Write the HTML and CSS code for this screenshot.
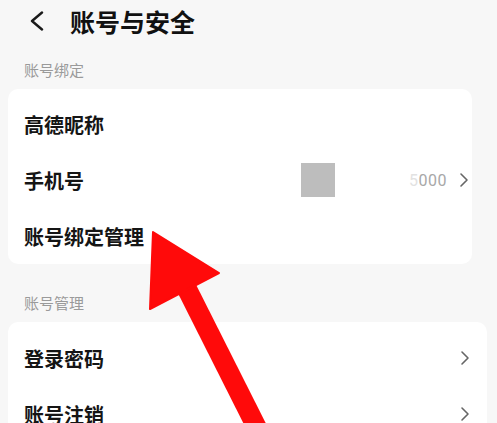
FILE: index.html
```html
<!DOCTYPE html>
<html lang="zh-CN">
<head>
<meta charset="utf-8">
<title>账号与安全</title>
<link rel="stylesheet" href="styles.css">
</head>
<body>
<div class="page">
  <header class="header">
    <svg class="back" width="16" height="20" viewBox="0 0 16 20"><path d="M13 1.5 L3 10 L13 18.5" fill="none" stroke="#1a1a1a" stroke-width="2.4" stroke-linecap="round" stroke-linejoin="round"/></svg>
    <h1 class="title">账号与安全</h1>
  </header>

  <div class="section-label">账号绑定</div>
  <div class="card card-a">
    <div class="row"><span class="row-text">高德昵称</span></div>
    <div class="row">
      <span class="row-text">手机号</span>
      <span class="mask"></span>
      <span class="value"><span class="faded">5</span>000</span>
      <svg class="chev" width="10" height="16" viewBox="0 0 10 16"><path d="M2 2 L8 8 L2 14" fill="none" stroke="#666" stroke-width="1.6" stroke-linecap="round" stroke-linejoin="round"/></svg>
    </div>
    <div class="row"><span class="row-text">账号绑定管理</span></div>
  </div>

  <div class="section-label section-label-2">账号管理</div>
  <div class="card card-b">
    <div class="row">
      <span class="row-text">登录密码</span>
      <svg class="chev chev-end" width="10" height="16" viewBox="0 0 10 16"><path d="M2 2 L8 8 L2 14" fill="none" stroke="#666" stroke-width="1.6" stroke-linecap="round" stroke-linejoin="round"/></svg>
    </div>
    <div class="row">
      <span class="row-text">账号注销</span>
      <svg class="chev chev-end" width="10" height="16" viewBox="0 0 10 16"><path d="M2 2 L8 8 L2 14" fill="none" stroke="#666" stroke-width="1.6" stroke-linecap="round" stroke-linejoin="round"/></svg>
    </div>
  </div>

  <svg class="arrow" width="497" height="423" viewBox="0 0 497 423">
    <line x1="185" y1="285" x2="258" y2="430" stroke="#ff0a0a" stroke-width="20"/>
    <polygon points="153,232 219,273 150,309" fill="#ff0a0a" stroke="#ff0a0a" stroke-width="2" stroke-linejoin="round"/>
  </svg>
</div>
</body>
</html>
```
FILE: styles.css
```css
html, body {
  margin: 0;
  padding: 0;
  background: #f7f7f7;
}
body {
  font-family: "Noto Sans CJK SC", "Noto Sans", sans-serif;
  color: #1a1a1a;
}
.page {
  position: relative;
  width: 497px;
  height: 423px;
  overflow: hidden;
}
.header {
  height: 42px;
  display: flex;
  align-items: center;
  padding-left: 29px;
}
.back {
  display: block;
}
.title {
  margin: 0 0 0 25px;
  font-size: 25px;
  font-weight: 700;
  line-height: 42px;
  color: #111;
}
.section-label {
  padding: 18px 0 9px 24px;
  font-size: 15px;
  line-height: 20px;
  height: 20px;
  color: #9a9a9a;
}
.section-label-2 {
  padding-top: 29px;
}
.card {
  background: #ffffff;
  border-radius: 10px;
  margin-left: 8px;
  padding-top: 7px;
}
.card-a {
  width: 464px;
}
.card-b {
  width: 479px;
  padding-top: 8px;
}
.row {
  height: 56px;
  display: flex;
  align-items: center;
  padding-left: 16px;
}
.row-text {
  font-size: 20px;
  font-weight: 600;
  color: #151515;
}
.mask {
  width: 34px;
  height: 34px;
  background: #bdbdbd;
  margin-left: 217px;
}
.value {
  margin-left: 74px;
  font-size: 16px;
  font-family: "Roboto", "Noto Sans", sans-serif;
  color: #a8a8a8;
  letter-spacing: 0.5px;
}
.faded {
  color: #e2e2e2;
}
.chev {
  margin-left: 12px;
  display: block;
}
.chev-end {
  margin-left: auto;
  margin-right: 17px;
}
.arrow {
  position: absolute;
  left: 0;
  top: 0;
  pointer-events: none;
}
```
